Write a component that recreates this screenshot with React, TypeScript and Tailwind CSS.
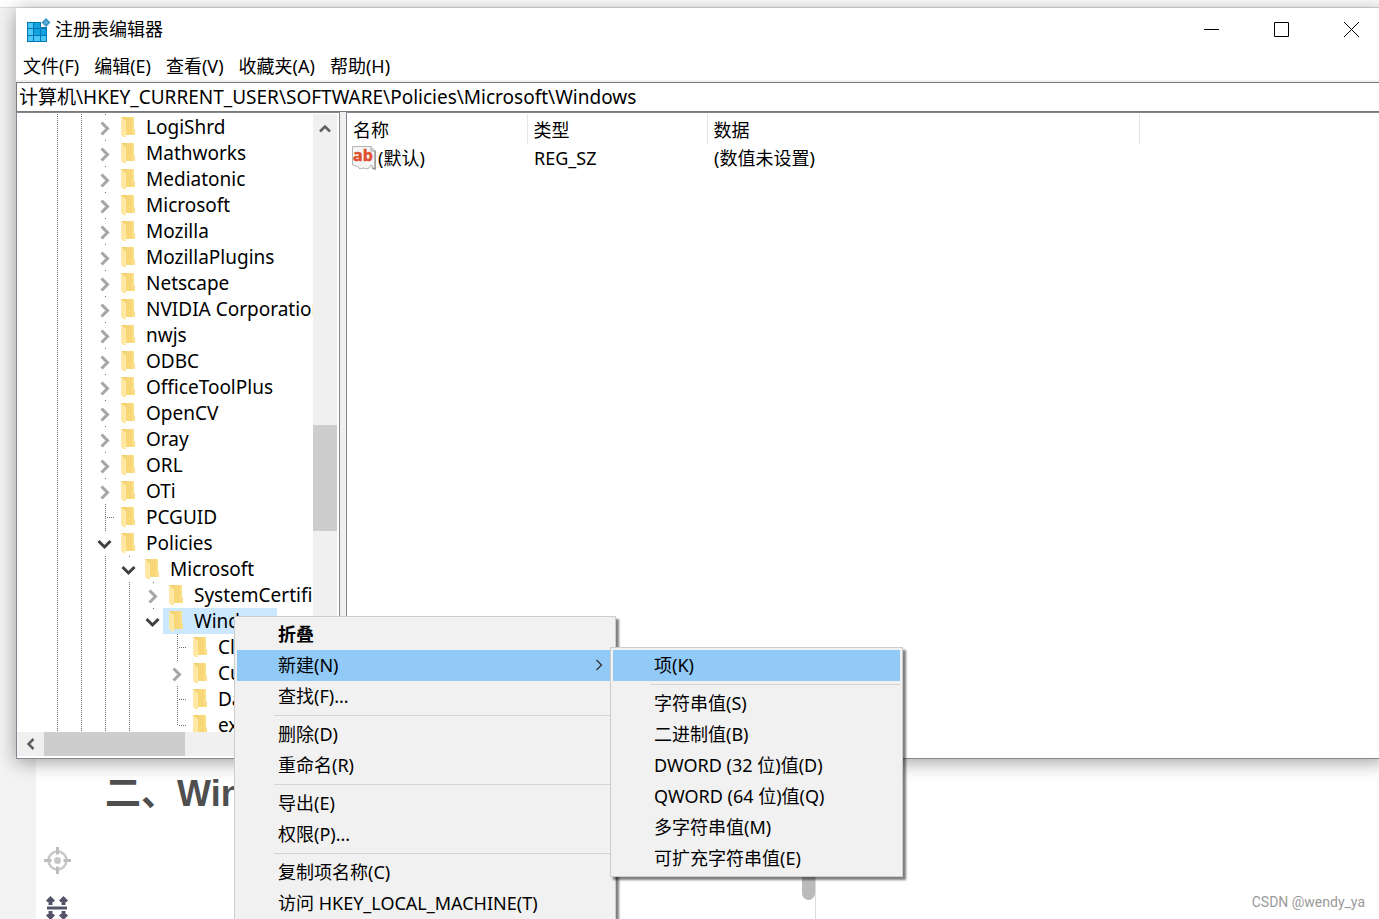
import type { ReactNode } from "react";

type Cell = "line" | "blank" | "closed" | "open" | "tee" | "last";

interface TreeRow {
  name: string;
  cells: Cell[];
  selected?: boolean;
}

const level0 = (name: string, cell: Cell = "closed"): TreeRow => ({
  name,
  cells: ["line", "line", cell],
});

const rows: TreeRow[] = [
  level0("LogiShrd"),
  level0("Mathworks"),
  level0("Mediatonic"),
  level0("Microsoft"),
  level0("Mozilla"),
  level0("MozillaPlugins"),
  level0("Netscape"),
  level0("NVIDIA Corporation"),
  level0("nwjs"),
  level0("ODBC"),
  level0("OfficeToolPlus"),
  level0("OpenCV"),
  level0("Oray"),
  level0("ORL"),
  level0("OTi"),
  level0("PCGUID", "tee"),
  level0("Policies", "open"),
  { name: "Microsoft", cells: ["line", "line", "line", "open"] },
  { name: "SystemCertificates", cells: ["line", "line", "line", "line", "closed"] },
  { name: "Windows", cells: ["line", "line", "line", "line", "open"], selected: true },
  { name: "CloudContent", cells: ["line", "line", "line", "line", "blank", "tee"] },
  { name: "CurrentVersion", cells: ["line", "line", "line", "line", "blank", "closed"] },
  { name: "DataCollection", cells: ["line", "line", "line", "line", "blank", "tee"] },
  { name: "explorer", cells: ["line", "line", "line", "line", "blank", "last"] },
];

function TreeCell({ kind }: { kind: Cell }) {
  return (
    <svg width="24" height="26" viewBox="0 0 24 26" fill="none" className="shrink-0">
      {(kind === "line" || kind === "tee") && (
        <path d="M14.5 0V26" stroke="#6d6d6d" strokeDasharray="1 1" />
      )}
      {kind === "last" && <path d="M14.5 0V14" stroke="#6d6d6d" strokeDasharray="1 1" />}
      {(kind === "tee" || kind === "last") && (
        <path d="M16 13.5H24" stroke="#6d6d6d" strokeDasharray="1 1" />
      )}
      {(kind === "closed" || kind === "open") && <path d="M14.5 0V1" stroke="#6d6d6d" />}
      {kind === "closed" && (
        <path d="M10.5 8.5L16.5 14.5L10.5 20.5" stroke="#a6a6a6" strokeWidth="3" />
      )}
      {kind === "open" && <path d="M7.5 11L13.5 17L19.5 11" stroke="#404040" strokeWidth="3" />}
    </svg>
  );
}

function Folder() {
  return (
    <svg width="14" height="22" viewBox="0 0 14 22" className="shrink-0">
      <path d="M3 1H13V13L14 14V19H3Z" fill="#f7d778" />
      <path d="M11 1H13V13L14 14V19H11Z" fill="#fbdf87" />
      <path d="M0 1L5 5V20L4 22L0 19Z" fill="#ffe8a3" />
      <path d="M0 1H4L5 5Z" fill="#f3cf6e" />
    </svg>
  );
}

function RegistryIcon() {
  return (
    <svg width="24" height="24" viewBox="0 0 24 24">
      <path d="M0 4H14V9H20V24H0Z" fill="#0078b4" />
      <path d="M1 5h5v5H1zM1 11h5v6H1zM7 18h6v5H7zM1 18h5v5H1zM14 18h5v5h-5z" fill="#4cc6f5" />
      <path d="M7 5h6v5H7zM7 11h6v6H7zM14 11h5v6h-5z" fill="#14a0dc" />
      <path d="M19 0L23.5 4.5L19 9L14.5 4.5Z" fill="#3b95c6" />
      <path d="M19 2.5L21 4.5L19 6.5L17 4.5Z" fill="#62b4dc" />
    </svg>
  );
}

function StringValueIcon() {
  return (
    <svg width="24" height="24" viewBox="0 0 24 24" className="shrink-0">
      <path
        d="M.5 .5H19L23.5 5V23L20 22V19L18 20L16 23L11 22L8 23L5 20L.5 19Z"
        fill="#f6f6f6"
        stroke="#b4b4b4"
      />
      <path d="M19 .5V5H23.5" fill="#ddd" stroke="#a4a4a4" />
      <path d="M23 5V23L20 22" stroke="#999" strokeWidth="1.5" fill="none" />
      <text
        x="11"
        y="15"
        textAnchor="middle"
        fontSize="16"
        fontWeight="700"
        fontFamily="Open Sans, sans-serif"
        fill="#dd5230"
        stroke="#dd5230"
        strokeWidth=".5"
      >
        ab
      </text>
    </svg>
  );
}

function MenuItem({
  children,
  active,
  bold,
  submenu,
}: {
  children: ReactNode;
  active?: boolean;
  bold?: boolean;
  submenu?: boolean;
}) {
  return (
    <button
      role="menuitem"
      aria-haspopup={submenu ? "menu" : undefined}
      className={`flex h-[31px] w-full items-center justify-between pr-[10px] pb-[2px] pl-[41px] text-left whitespace-nowrap ${
        active ? "bg-[#91c9f7]" : ""
      } ${bold ? "font-bold" : ""}`}
    >
      {children}
      {submenu && (
        <svg width="8" height="12" viewBox="0 0 8 12" fill="none">
          <path d="M1.5 1L6.5 6L1.5 11" stroke="#333" strokeWidth="1.3" />
        </svg>
      )}
    </button>
  );
}

function Separator() {
  return <hr className="my-[3px] ml-[37px] border-[#d5d5d5]" />;
}

function TitleBar() {
  return (
    <header className="flex h-[43px] items-center pl-[11px]">
      <RegistryIcon />
      <h1 className="ml-1 flex-1 pb-[2px]">注册表编辑器</h1>
      <button aria-label="最小化" className="flex h-full w-[70px] items-center justify-center">
        <svg width="15" height="15" viewBox="0 0 15 15">
          <path d="M0 7.5H15" stroke="#000" />
        </svg>
      </button>
      <button aria-label="最大化" className="flex h-full w-[70px] items-center justify-center">
        <svg width="15" height="15" viewBox="0 0 15 15" fill="none">
          <path d="M.5 .5H14.5V14.5H.5Z" stroke="#000" />
        </svg>
      </button>
      <button aria-label="关闭" className="flex h-full w-[70px] items-center justify-center">
        <svg width="15" height="15" viewBox="0 0 15 15">
          <path d="M0 0L15 15M15 0L0 15" stroke="#000" />
        </svg>
      </button>
    </header>
  );
}

function KeyTree() {
  return (
    <section className="w-[324px] shrink-0 border border-[#828790] bg-white pr-[2px] pb-[2px] text-[19px]">
      <div className="flex h-[619px] pt-[1px]">
        <ul role="tree" className="min-w-0 flex-1 overflow-hidden pl-[26px]">
          {rows.map((row, i) => (
            <li key={i} role="treeitem" aria-selected={!!row.selected} className="flex h-[26px]">
              {row.cells.map((kind, j) => (
                <TreeCell key={j} kind={kind} />
              ))}
              <button
                className={`flex h-full items-center gap-[11px] pr-[2px] pl-[6px] whitespace-nowrap ${
                  row.selected ? "bg-[#cce8ff]" : ""
                }`}
              >
                <Folder />
                {row.name}
              </button>
            </li>
          ))}
        </ul>
        <div className="flex w-6 flex-col bg-[#f0f0f0]">
          <button aria-label="向上滚动" className="flex h-[29px] items-center justify-center">
            <svg width="12" height="9" viewBox="0 0 12 9" fill="none">
              <path d="M1 7.5L6 2.5L11 7.5" stroke="#606060" strokeWidth="2.5" />
            </svg>
          </button>
          <div className="mt-[282px] h-[106px] bg-[#cdcdcd]" />
        </div>
      </div>
      <div className="flex h-6 bg-[#f0f0f0]">
        <button aria-label="向左滚动" className="flex w-[27px] items-center justify-center">
          <svg width="9" height="12" viewBox="0 0 9 12" fill="none">
            <path d="M7.5 1L2.5 6L7.5 11" stroke="#606060" strokeWidth="2.5" />
          </svg>
        </button>
        <div className="w-[141px] bg-[#cdcdcd]" />
      </div>
    </section>
  );
}

function ValueList() {
  return (
    <section className="flex-1 border border-[#828790] bg-white pt-[1px]">
      <table className="w-full table-fixed text-left">
        <thead>
          <tr className="h-[30px]">
            <th className="w-[180px] border-r border-[#e5e5e5] pt-[2px] pl-[6px] font-normal">名称</th>
            <th className="w-[180px] border-r border-[#e5e5e5] pt-[2px] pl-[6px] font-normal">类型</th>
            <th className="w-[432px] border-r border-[#e5e5e5] pt-[2px] pl-[6px] font-normal">数据</th>
            <th />
          </tr>
        </thead>
        <tbody>
          <tr className="h-[28px]">
            <td className="pl-[5px]">
              <span className="flex items-center gap-[2px]">
                <StringValueIcon />
                (默认)
              </span>
            </td>
            <td className="pl-[7px]">REG_SZ</td>
            <td className="pl-[7px]">(数值未设置)</td>
            <td />
          </tr>
        </tbody>
      </table>
    </section>
  );
}

function RegistryEditor() {
  return (
    <div className="absolute top-2 -right-[7px] left-4 bg-white shadow-[0_3px_18px_rgba(0,0,0,0.38)]">
      <TitleBar />
      <nav className="flex h-[31px] border-b-2 border-[#f0f0f0]">
        {["文件(F)", "编辑(E)", "查看(V)", "收藏夹(A)", "帮助(H)"].map((label) => (
          <button key={label} className="pr-2 pl-[7px]">
            {label}
          </button>
        ))}
      </nav>
      <input
        aria-label="地址"
        defaultValue="计算机\HKEY_CURRENT_USER\SOFTWARE\Policies\Microsoft\Windows"
        className="block h-[30px] w-full border border-[#7a7a7a] px-[2px] pb-[2px] text-[19px] outline-none"
      />
      <div className="flex gap-[6px] bg-[#f0f0f0]">
        <KeyTree />
        <ValueList />
      </div>
    </div>
  );
}

const menuBox =
  "border border-[#ccc] bg-[#f1f1f1] p-[2px] shadow-[3px_3px_2px_rgba(0,0,0,0.5)]";

function ContextMenu() {
  return (
    <div role="menu" className={`absolute top-[616px] left-[234px] w-[382px] ${menuBox}`}>
      <MenuItem bold>折叠</MenuItem>
      <MenuItem active submenu>
        新建(N)
      </MenuItem>
      <MenuItem>查找(F)...</MenuItem>
      <Separator />
      <MenuItem>删除(D)</MenuItem>
      <MenuItem>重命名(R)</MenuItem>
      <Separator />
      <MenuItem>导出(E)</MenuItem>
      <MenuItem>权限(P)...</MenuItem>
      <Separator />
      <MenuItem>复制项名称(C)</MenuItem>
      <MenuItem>访问 HKEY_LOCAL_MACHINE(T)</MenuItem>
    </div>
  );
}

function NewSubmenu() {
  return (
    <div role="menu" className={`absolute top-[647px] left-[610px] w-[293px] ${menuBox}`}>
      <MenuItem active>项(K)</MenuItem>
      <Separator />
      <MenuItem>字符串值(S)</MenuItem>
      <MenuItem>二进制值(B)</MenuItem>
      <MenuItem>DWORD (32 位)值(D)</MenuItem>
      <MenuItem>QWORD (64 位)值(Q)</MenuItem>
      <MenuItem>多字符串值(M)</MenuItem>
      <MenuItem>可扩充字符串值(E)</MenuItem>
    </div>
  );
}

function Article() {
  return (
    <div className="flex min-h-screen flex-col">
      <div className="h-2 border-b border-[#ddd]" />
      <div className="flex flex-1">
        <aside className="w-9 bg-[#f3f3f3]" />
        <main className="flex w-[780px] gap-[27px] border-r border-[#ddd] pt-[766px]">
          <div className="flex w-[42px] flex-col items-center gap-[22px] pt-[73px]">
            <svg width="27" height="27" viewBox="0 0 27 27" fill="none" stroke="#c8c8c8">
              <circle cx="13.5" cy="13.5" r="9" strokeWidth="2.5" />
              <circle cx="13.5" cy="13.5" r="3.5" fill="#c8c8c8" stroke="none" />
              <path
                d="M13.5 0V7.5M13.5 19.5V27M0 13.5H7.5M19.5 13.5H27"
                strokeWidth="3"
                stroke="#bdbdbd"
              />
            </svg>
            <svg width="22" height="24" viewBox="0 0 22 24" fill="#535468">
              <path d="M4.5 0L9 4.5L7.5 6H6.5V9H2.5V6H1.5L0 4.5Z" />
              <path d="M17.5 0L22 4.5L20.5 6H19.5V9H15.5V6H14.5L13 4.5Z" />
              <path d="M1 10.5H21V13.5H1Z" />
              <path d="M4.5 24L9 19.5L7.5 18H6.5V15H2.5V18H1.5L0 19.5Z" />
              <path d="M17.5 24L22 19.5L20.5 18H19.5V15H15.5V18H14.5L13 19.5Z" />
            </svg>
          </div>
          <h2 className="font-['Liberation_Sans','Noto_Sans_CJK_SC',sans-serif] text-4xl font-bold text-[#4f4f4f]">
            二、Windows
          </h2>
        </main>
      </div>
      <div className="absolute bottom-5 left-[802px] h-24 w-[13px] rounded-full bg-[#bbb]" />
      <p className="absolute right-[14px] bottom-2 font-['Roboto',sans-serif] text-sm text-[#999]">
        CSDN @wendy_ya
      </p>
    </div>
  );
}

export default function App() {
  return (
    <div className="relative min-h-screen overflow-hidden bg-white font-['Noto_Sans','Noto_Sans_CJK_SC',sans-serif] text-[18px] leading-6 text-black">
      <Article />
      <RegistryEditor />
      <ContextMenu />
      <NewSubmenu />
    </div>
  );
}
